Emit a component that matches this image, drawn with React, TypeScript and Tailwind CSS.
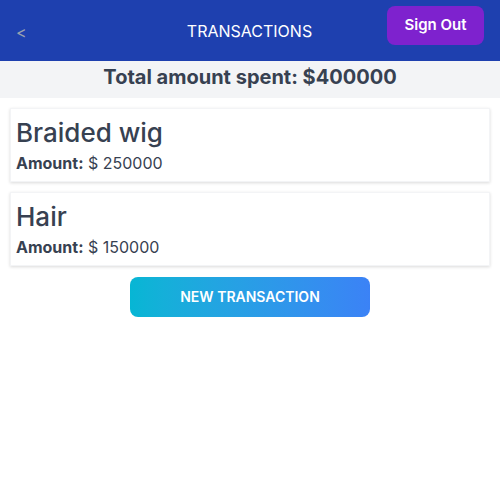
export default function App() {
  const items = [
    { name: "Braided wig", amount: 250000 },
    { name: "Hair", amount: 150000 },
  ];
  const total = items.reduce((s, i) => s + i.amount, 0);

  return (
    <div className="min-h-screen bg-white text-[#374151]" style={{ fontFamily: "Inter, 'Noto Sans', sans-serif" }}>
      {/* Header */}
      <header className="h-[61px] bg-[#1e40af] flex items-center justify-between pl-4 pr-4">
        <button className="text-[#9ca3af] text-base w-[24px] text-left pt-[2px]">&lt;</button>
        <h1 className="text-white text-base ml-[72px] pt-[1px]">TRANSACTIONS</h1>
        <button className="bg-[#7e22ce] text-white font-semibold text-[15px] w-[97px] h-[39px] rounded-lg -mt-[10px]">
          Sign Out
        </button>
      </header>

      {/* Total */}
      <div className="bg-[#f3f4f6] h-[37px] flex items-center justify-center">
        <p className="text-xl font-bold text-[#374151] -mt-[6px]">Total amount spent: ${total}</p>
      </div>

      {/* List */}
      <div className="px-[10px] pt-[10px] flex flex-col gap-[10px]">
        {items.map((item) => (
          <div key={item.name} className="bg-white shadow-[0_1px_3px_rgba(0,0,0,0.15)] border border-[#f3f4f6] px-[5px] pt-[6px] pb-[6px]">
            <h2 className="text-[26px] font-medium leading-[36px] text-[#374151]">{item.name}</h2>
            <p className="text-base leading-[24px] text-[#374151]">
              <span className="font-bold">Amount:</span> $ {item.amount}
            </p>
          </div>
        ))}
      </div>

      <div className="flex justify-center pt-[11px]">
        <button className="w-[240px] h-[40px] rounded-lg bg-gradient-to-r from-[#06b6d4] to-[#3b82f6] text-white font-semibold text-sm uppercase">
          New Transaction
        </button>
      </div>
    </div>
  );
}
